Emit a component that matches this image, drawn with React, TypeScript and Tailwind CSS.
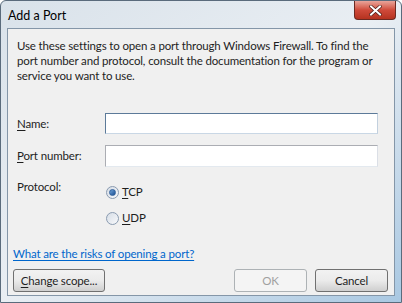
import React from "react";

const font = { fontFamily: 'Lato, "Noto Sans", sans-serif' };

function Radio({ checked, label, u }: { checked?: boolean; label: string; u: string }) {
  return (
    <div className="flex items-center h-[16px]">
      <span className="relative w-[13px] h-[13px] rounded-full border border-[#8a9bb0] bg-gradient-to-br from-[#d6dde6] to-[#f8f9fb] flex items-center justify-center">
        {checked && (
          <span className="w-[7px] h-[7px] rounded-full bg-gradient-to-br from-[#6fa3d8] to-[#1a4f93] border border-[#2f5f9a]" />
        )}
      </span>
      <span className="ml-[3px] text-[#1e1e1e]">
        <span className="underline decoration-1 underline-offset-2">{u}</span>
        {label}
      </span>
    </div>
  );
}

function Btn({ children, disabled, w }: { children: React.ReactNode; disabled?: boolean; w: string }) {
  return (
    <div
      className={`${w} h-[23px] rounded-[3px] border flex items-center justify-center ${
        disabled
          ? "border-[#adb2b5] bg-[#f4f4f4] text-[#a0a0a0]"
          : "border-[#707070] bg-gradient-to-b from-[#f2f2f2] via-[#ebebeb] to-[#cfcfcf] text-[#1e1e1e]"
      }`}
    >
      {children}
    </div>
  );
}

export default function App() {
  return (
    <div
      className="w-[402px] h-[303px] flex flex-col bg-gradient-to-br from-[#d9e2ea] via-[#e9eef3] to-[#a9c8e2] border border-[#5a6b7c] rounded-t-[6px] overflow-hidden"
      style={font}
    >
      {/* title bar */}
      <div className="h-[27px] flex items-start justify-between shrink-0">
        <span className="ml-[7px] mt-[6px] text-[12.5px] text-black">Add a Port</span>
        <div className="mr-[5px] w-[42px] h-[19px] rounded-b-[4px] border border-[#6b2a22] border-t-0 bg-gradient-to-b from-[#e8a49a] via-[#cf4a3a] to-[#b5321f] flex items-center justify-center">
          <svg width="13" height="11" viewBox="0 0 13 11">
            <path d="M2 1.5 L11 9.5 M11 1.5 L2 9.5" stroke="#4a1a14" strokeWidth="3.4" strokeLinecap="square" />
            <path d="M2 1.5 L11 9.5 M11 1.5 L2 9.5" stroke="#ffffff" strokeWidth="2" strokeLinecap="square" />
          </svg>
        </div>
      </div>

      {/* client area */}
      <div className="mx-[6px] mb-[6px] flex-1 border border-[#8496a8] bg-[#f0f0f0] flex flex-col pl-[5px] pr-[6px] text-[11.5px] tracking-[-0.15px] text-[#1e1e1e]">
        <p className="mt-[9px] ml-[4px] leading-[15px] pr-[10px]">
          Use these settings to open a port through Windows Firewall. To find the port number and protocol, consult the documentation for the program or service you want to use.
        </p>

        <div className="mt-[30px] flex items-center">
          <span className="ml-[4px] w-[88px]">
            <span className="underline underline-offset-2">N</span>ame:
          </span>
          <div className="w-[273px] h-[21px] border border-[#5c7a99] border-b-[#c9d7e5] border-r-[#c2d0de] bg-white" />
        </div>

        <div className="mt-[11px] flex items-center">
          <span className="ml-[4px] w-[88px]">
            <span className="underline underline-offset-2">P</span>ort number:
          </span>
          <div className="w-[273px] h-[22px] border border-[#abadb3] border-b-[#e3e9ef] border-r-[#dbdfe6] bg-white" />
        </div>

        <div className="mt-[12px] flex items-start">
          <span className="ml-[4px] w-[89px] leading-[16px]">Protocol:</span>
          <div className="mt-[5px] flex flex-col gap-[10px]">
            <Radio checked u="T" label="CP" />
            <Radio u="U" label="DP" />
          </div>
        </div>

        <div className="mt-[20px] text-[#0066cc] underline underline-offset-2 leading-[15px]">
          What are the risks of opening a port?
        </div>

        <div className="mt-[8px] flex items-center">
          <Btn w="w-[92px]">
            <span className="underline underline-offset-2">C</span>hange scope...
          </Btn>
          <div className="flex-1" />
          <Btn w="w-[73px]" disabled>
            OK
          </Btn>
          <div className="w-[8px]" />
          <Btn w="w-[73px]">Cancel</Btn>
        </div>
      </div>
    </div>
  );
}
